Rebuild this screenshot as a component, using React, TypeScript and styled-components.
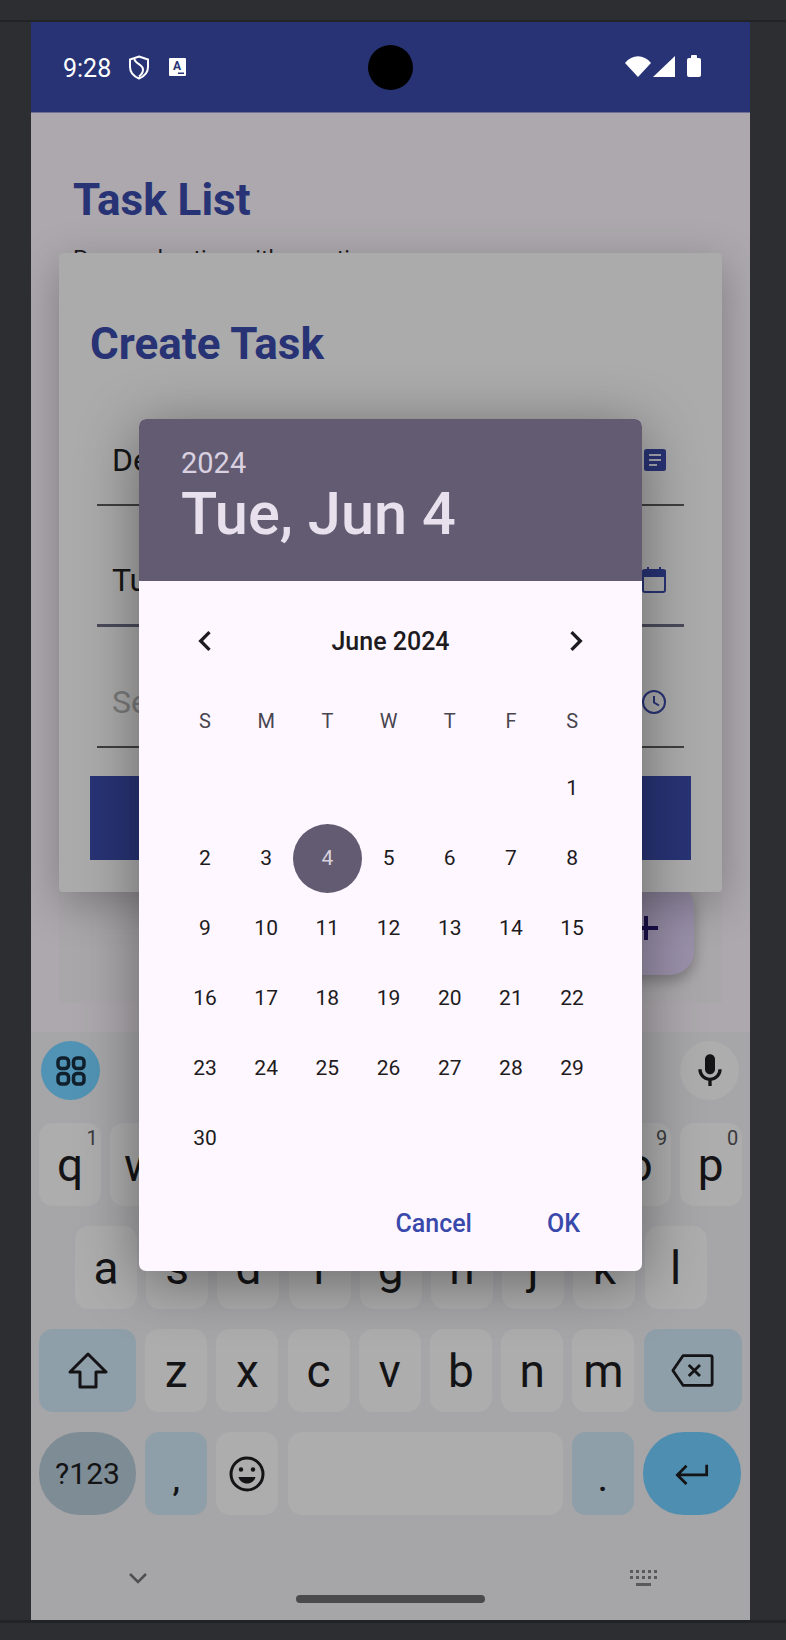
import React from "react";
import styled, { createGlobalStyle } from "styled-components";

const GlobalStyle = createGlobalStyle`
  html, body { margin: 0; padding: 0; background: #2d2e32; }
  body { font-family: Roboto, "Liberation Sans", sans-serif; }
  * { box-sizing: border-box; }
`;

const Page = styled.div`
  width: 786px;
  height: 1640px;
  background: #2d2e32;
  display: flex;
  flex-direction: column;
  overflow: hidden;
`;

const WindowBar = styled.div`
  height: 22px;
  flex: none;
  border-bottom: 2px solid #222327;
  overflow: hidden;
`;

const WindowTitle = styled.span`
  display: block;
  margin: -23px 0 0 42px;
  font-size: 20px;
  line-height: 24px;
  color: #e4e4e4;
`;

const Device = styled.div`
  position: relative;
  width: 719px;
  height: 1598px;
  margin-left: 31px;
  flex: none;
  display: flex;
  flex-direction: column;
  overflow: hidden;
`;

const BottomEdge = styled.div`
  height: 3px;
  flex: none;
  background: #222327;
`;

/* status bar */
const StatusBar = styled.div`
  height: 91px;
  flex: none;
  background: #273375;
  border-bottom: 1px solid #6f6f95;
  display: grid;
  grid-template-columns: 1fr auto 1fr;
  align-items: center;
  padding: 0 32px;
  color: #fff;
`;

const StatusLeft = styled.div`
  display: flex;
  align-items: center;
`;

const StatusRight = styled.div`
  display: flex;
  align-items: center;
  justify-content: flex-end;
  padding-right: 17px;
`;

const Time = styled.span`
  font-size: 25px;
  width: 65px;
  margin-top: 2px;
`;

const Camera = styled.div`
  width: 45px;
  height: 45px;
  border-radius: 50%;
  background: #000;
`;

/* task list behind the dialogs */
const Content = styled.div`
  position: relative;
  flex: 1;
  background: #aca8ad;
  padding: 62px 42px 0;
`;

const PageTitle = styled.h1`
  margin: 0;
  font-size: 44px;
  line-height: 50px;
  font-weight: 700;
  color: #283375;
`;

const SubTitle = styled.p`
  margin: 21px 0 0;
  font-size: 23px;
  line-height: 28px;
  color: #1c1c1e;
`;

const ListPanel = styled.div`
  position: absolute;
  left: 28px;
  right: 28px;
  bottom: 29px;
  height: 120px;
  background: #aaa7ab;
`;

const Fab = styled.div`
  position: absolute;
  left: 571px;
  bottom: 57px;
  width: 92px;
  height: 92px;
  border-radius: 24px;
  background: #9a90aa;
  box-shadow: 0 6px 14px rgba(0, 0, 0, 0.28);
`;

const FabPlus = styled.svg`
  position: absolute;
  left: 30px;
  top: 31px;
`;

/* create task card */
const Card = styled.div`
  position: absolute;
  left: 28px;
  top: 231px;
  width: 663px;
  height: 639px;
  padding: 0 31px;
  background: #ababab;
  border-radius: 4px;
  box-shadow: 0 12px 44px rgba(0, 0, 0, 0.26);
`;

const CardTitle = styled.h2`
  margin: 0;
  padding-top: 66px;
  font-size: 44px;
  line-height: 50px;
  font-weight: 700;
  color: #283375;
`;

const Field = styled.div<{ $thick?: boolean; $first?: boolean }>`
  height: 121px;
  margin: ${(p) => (p.$first ? "16px 7px 0" : "0 7px")};
  padding: 30px 18px 0 15px;
  display: flex;
  align-items: center;
  justify-content: space-between;
  border-bottom: ${(p) => (p.$thick ? "3px solid #4b4a5a" : "2px solid #3f3f42")};
`;

const FieldText = styled.span<{ $muted?: boolean }>`
  font-size: 32px;
  color: ${(p) => (p.$muted ? "#7a7a7a" : "#161616")};
`;

const SubmitButton = styled.div`
  height: 84px;
  margin-top: 28px;
  background: #283375;
`;

/* date picker */
const Picker = styled.div`
  position: absolute;
  left: 108px;
  top: 397px;
  width: 503px;
  height: 852px;
  border-radius: 7px;
  overflow: hidden;
  background: #fef7ff;
  display: flex;
  flex-direction: column;
  box-shadow: 0 10px 60px rgba(0, 0, 0, 0.4);
`;

const PickerHeader = styled.div`
  height: 162px;
  flex: none;
  background: #625b71;
  padding: 28px 0 0 42px;
  color: #e8e0ec;
`;

const Year = styled.div`
  font-size: 29px;
  line-height: 33px;
  color: #d9d0e0;
`;

const BigDate = styled.div`
  font-size: 59.5px;
  line-height: 68px;
  font-weight: 500;
`;

const MonthRow = styled.div`
  height: 40px;
  margin-top: 40px;
  padding: 0 46px;
  display: flex;
  align-items: center;
  justify-content: space-between;
  font-size: 25px;
  font-weight: 500;
  color: #1d1b20;
`;

const WeekGrid = styled.div`
  margin-top: 40px;
  padding-left: 35.4px;
  display: grid;
  grid-template-columns: repeat(7, 61.2px);
  height: 40px;
  align-items: center;
  justify-items: center;
  font-size: 20px;
  color: #49454f;
`;

const DayGrid = styled.div`
  margin-top: 12px;
  padding-left: 35.4px;
  display: grid;
  grid-template-columns: repeat(7, 61.2px);
  grid-auto-rows: 70px;
`;

const DayCell = styled.div`
  display: flex;
  align-items: center;
  justify-content: center;
`;

const Day = styled.span<{ $selected?: boolean }>`
  flex: none;
  width: 69px;
  height: 69px;
  border-radius: 50%;
  display: flex;
  align-items: center;
  justify-content: center;
  font-size: 21px;
  color: ${(p) => (p.$selected ? "#d8d2de" : "#1d1b20")};
  background: ${(p) => (p.$selected ? "#625b71" : "transparent")};
`;

const Actions = styled.div`
  margin-top: 30px;
  height: 40px;
  padding-right: 62px;
  display: flex;
  align-items: center;
  justify-content: flex-end;
  gap: 75px;
  font-size: 25px;
  font-weight: 500;
  color: #3949ab;
`;

/* keyboard */
const Keyboard = styled.div`
  height: 588px;
  flex: none;
  background: #a6a5a8;
  padding-top: 9px;
  display: flex;
  flex-direction: column;
`;

const KeyboardTools = styled.div`
  display: flex;
  justify-content: space-between;
  padding: 0 11px 0 10px;
  margin-bottom: 23px;
`;

const ToolButton = styled.div<{ $accent?: boolean }>`
  width: 59px;
  height: 59px;
  border-radius: 50%;
  display: flex;
  align-items: center;
  justify-content: center;
  background: ${(p) => (p.$accent ? "#5193b4" : "#adadad")};
`;

const KeyRow = styled.div<{ $cols: string; $inset?: number }>`
  display: grid;
  grid-template-columns: ${(p) => p.$cols};
  column-gap: 9.2px;
  height: 83px;
  margin-bottom: 20px;
  padding-left: ${(p) => p.$inset ?? 8}px;
`;

const Key = styled.div<{ $tone?: "plain" | "mod" | "dark" | "accent"; $round?: boolean; $low?: boolean }>`
  position: relative;
  display: flex;
  align-items: ${(p) => (p.$low ? "flex-end" : "center")};
  justify-content: center;
  border-radius: ${(p) => (p.$round ? "41px" : "14px")};
  font-size: 46px;
  color: #141416;
  padding-bottom: ${(p) => (p.$low ? "16px" : "0")};
  background: ${(p) =>
    p.$tone === "mod"
      ? "#8f9fa9"
      : p.$tone === "dark"
        ? "#7e8c95"
        : p.$tone === "accent"
          ? "#4e8eb1"
          : "#adadad"};
`;

const Hint = styled.span`
  position: absolute;
  top: 3px;
  right: 2px;
  width: 14px;
  text-align: center;
  font-size: 20px;
  color: #3a3a3c;
`;

const SymbolLabel = styled.span`
  font-size: 30px;
`;

const Punctuation = styled.span`
  font-size: 34px;
  line-height: 40px;
  font-weight: 500;
`;

const KeyboardNav = styled.div`
  display: flex;
  justify-content: space-between;
  align-items: center;
  height: 20px;
  margin-top: 33px;
  padding: 0 93px 0 98px;
`;

const HomePill = styled.div`
  width: 189px;
  height: 8px;
  margin: 7px auto 0;
  border-radius: 4px;
  background: #4a4a4c;
`;

const Chevron = ({ right }: { right?: boolean }) => (
  <svg width="40" height="40" viewBox="0 0 24 24" fill="#1d1b20">
    <path d={right ? "M10 6 8.59 7.41 13.17 12l-4.58 4.59L10 18l6-6z" : "M15.41 7.41 14 6l-6 6 6 6 1.41-1.41L10.83 12z"} />
  </svg>
);

const ShieldIcon = () => (
  <svg width="22" height="25" viewBox="0 0 22 25" fill="none" stroke="#fff" strokeWidth="2" style={{ marginRight: 19 }}>
    <path d="M11 1.500 20 4.500V12c0 5-3.600 9.300-9 11.500C5.600 21.300 2 17 2 12V4.500z" />
    <path d="M6.500 4c0 4.500 8.500 5.500 8.500 10.500 0 3-2 5.500-4 7" />
  </svg>
);

const TranslateIcon = () => (
  <svg width="17" height="18" viewBox="0 0 17 18">
    <rect width="17" height="18" rx="1" fill="#fff" />
    <text x="8" y="12" textAnchor="middle" fontSize="12" fontWeight="700" fontFamily="Roboto" fill="#273375">A</text>
    <rect x="9" y="14.500" width="6" height="1.500" fill="#273375" />
  </svg>
);

const KEY_ROW_1 = "qwertyuiop".split("");
const KEY_ROW_2 = "asdfghjkl".split("");
const KEY_ROW_3 = "zxcvbnm".split("");
const WEEK = ["S", "M", "T", "W", "T", "F", "S"];
const HINTS = ["1", "2", "3", "4", "5", "6", "7", "8", "9", "0"];

export default function App() {
  const days: (number | null)[] = [null, null, null, null, null, null];
  for (let d = 1; d <= 30; d++) days.push(d);

  return (
    <>
      <GlobalStyle />
      <Page>
        <WindowBar>
          <WindowTitle>g</WindowTitle>
        </WindowBar>
        <Device>
          <StatusBar>
            <StatusLeft>
              <Time>9:28</Time>
              <ShieldIcon />
              <TranslateIcon />
            </StatusLeft>
            <Camera />
            <StatusRight>
              <svg width="76" height="24" viewBox="0 0 76 24" fill="#fff">
                <path d="M0 8C7-1 19-1 26 8L13 22z" />
                <path d="M28 22 50 1v21z" />
                <rect x="62" y="3" width="14" height="19" rx="2" />
                <rect x="66" y="0" width="6" height="4" rx="1" />
              </svg>
            </StatusRight>
          </StatusBar>

          <Content>
            <PageTitle>Task List</PageTitle>
            <SubTitle>Personal action with question</SubTitle>
            <ListPanel />
            <Fab>
              <FabPlus width="28" height="28" viewBox="0 0 28 28" fill="#1b0f4d">
                <rect x="12" y="2" width="4" height="24" />
                <rect x="2" y="12" width="24" height="4" />
              </FabPlus>
            </Fab>
          </Content>

          <Keyboard>
            <KeyboardTools>
              <ToolButton $accent>
                <svg width="30" height="30" viewBox="0 0 30 30" fill="none" stroke="#10202c" strokeWidth="3.500">
                  <rect x="2" y="2" width="10.500" height="10.500" rx="3.500" />
                  <rect x="17.500" y="2" width="10.500" height="10.500" rx="3.500" />
                  <rect x="2" y="17.500" width="10.500" height="10.500" rx="3.500" />
                  <rect x="17.500" y="17.500" width="10.500" height="10.500" rx="3.500" />
                </svg>
              </ToolButton>
              <ToolButton>
                <svg width="40" height="40" viewBox="0 0 24 24" fill="#141416">
                  <path d="M12 14c1.660 0 3-1.340 3-3V5c0-1.660-1.340-3-3-3S9 3.340 9 5v6c0 1.660 1.340 3 3 3z" />
                  <path d="M17 11c0 2.760-2.240 5-5 5s-5-2.240-5-5H5c0 3.530 2.610 6.430 6 6.920V21h2v-3.080c3.390-.49 6-3.390 6-6.920h-2z" />
                </svg>
              </ToolButton>
            </KeyboardTools>

            <KeyRow $cols="repeat(10, 62px)">
              {KEY_ROW_1.map((k, i) => (
                <Key key={k}>
                  {k}
                  <Hint>{HINTS[i]}</Hint>
                </Key>
              ))}
            </KeyRow>

            <KeyRow $cols="repeat(9, 62px)" $inset={44}>
              {KEY_ROW_2.map((k) => (
                <Key key={k}>{k}</Key>
              ))}
            </KeyRow>

            <KeyRow $cols="97px repeat(7, 62px) 98px">
              <Key $tone="mod">
                <svg width="40" height="40" viewBox="0 0 40 40" fill="none" stroke="#141416" strokeWidth="3" strokeLinejoin="round">
                  <path d="M20 3 38 21H28V36H12V21H2z" />
                </svg>
              </Key>
              {KEY_ROW_3.map((k) => (
                <Key key={k}>{k}</Key>
              ))}
              <Key $tone="mod">
                <svg width="43" height="35" viewBox="0 0 46 36" fill="none" stroke="#141416" strokeWidth="3" strokeLinejoin="round">
                  <path d="M13 2H42a2 2 0 0 1 2 2V32a2 2 0 0 1-2 2H13L2 18z" />
                  <path d="M19 12 31 24M31 12 19 24" />
                </svg>
              </Key>
            </KeyRow>

            <KeyRow $cols="97px 62px 62px 275px 62px 98px">
              <Key $tone="dark" $round>
                <SymbolLabel>?123</SymbolLabel>
              </Key>
              <Key $tone="mod" $low>
                <Punctuation>,</Punctuation>
              </Key>
              <Key>
                <svg width="36" height="36" viewBox="0 0 36 36" fill="none" stroke="#141416" strokeWidth="3">
                  <circle cx="18" cy="18" r="16" />
                  <circle cx="12" cy="13.500" r="2.200" fill="#141416" stroke="none" />
                  <circle cx="24" cy="13.500" r="2.200" fill="#141416" stroke="none" />
                  <path d="M9.500 21h17c-1 4-4.500 6.500-8.500 6.500S10.500 25 9.500 21z" fill="#141416" stroke="none" />
                </svg>
              </Key>
              <Key />
              <Key $tone="mod" $low>
                <Punctuation>.</Punctuation>
              </Key>
              <Key $tone="accent" $round>
                <svg width="34" height="22" viewBox="0 0 36 24" fill="none" stroke="#141416" strokeWidth="3">
                  <path d="M34 2V13H3M12 3 2 13l10 10" />
                </svg>
              </Key>
            </KeyRow>

            <KeyboardNav>
              <svg width="18" height="11" viewBox="0 0 18 11" fill="none" stroke="#4f4f52" strokeWidth="2.500">
                <path d="M1 1l8 8 8-8" />
              </svg>
              <svg width="27" height="16" viewBox="0 0 27 16" fill="#5a5a5d">
                {[0, 1, 2, 3, 4].map((c) => (
                  <React.Fragment key={c}>
                    <rect x={c * 6} y="0" width="3" height="3" />
                    <rect x={c * 6} y="6" width="3" height="3" />
                  </React.Fragment>
                ))}
                <rect x="6" y="13" width="15" height="3" />
              </svg>
            </KeyboardNav>
            <HomePill />
          </Keyboard>

          <Card>
            <CardTitle>Create Task</CardTitle>
            <Field $first>
              <FieldText>Description</FieldText>
              <svg width="22" height="22" viewBox="0 0 22 22">
                <rect width="22" height="22" rx="2.500" fill="#283375" />
                <path d="M5 6h12M5 11h12M5 16h8" stroke="#a6a6b0" strokeWidth="2" />
              </svg>
            </Field>
            <Field $thick>
              <FieldText>Tue, Jun 4</FieldText>
              <svg width="24" height="26" viewBox="0 0 24 26" fill="none" stroke="#283375" strokeWidth="2">
                <rect x="1" y="3" width="22" height="22" rx="2" />
                <path d="M1 4h22v5H1z" fill="#283375" />
                <path d="M6 0v4M18 0v4" />
              </svg>
            </Field>
            <Field>
              <FieldText $muted>Select time</FieldText>
              <svg width="24" height="24" viewBox="0 0 24 24" fill="none" stroke="#283375" strokeWidth="2">
                <circle cx="12" cy="12" r="11" />
                <path d="M12 6v6.500l5 3" />
              </svg>
            </Field>
            <SubmitButton />
          </Card>

          <Picker>
            <PickerHeader>
              <Year>2024</Year>
              <BigDate>Tue, Jun 4</BigDate>
            </PickerHeader>
            <MonthRow>
              <Chevron />
              June 2024
              <Chevron right />
            </MonthRow>
            <WeekGrid>
              {WEEK.map((w, i) => (
                <span key={i}>{w}</span>
              ))}
            </WeekGrid>
            <DayGrid>
              {days.map((d, i) => (
                <DayCell key={i}>{d && <Day $selected={d === 4}>{d}</Day>}</DayCell>
              ))}
            </DayGrid>
            <Actions>
              <span>Cancel</span>
              <span>OK</span>
            </Actions>
          </Picker>
        </Device>
        <BottomEdge />
      </Page>
    </>
  );
}
